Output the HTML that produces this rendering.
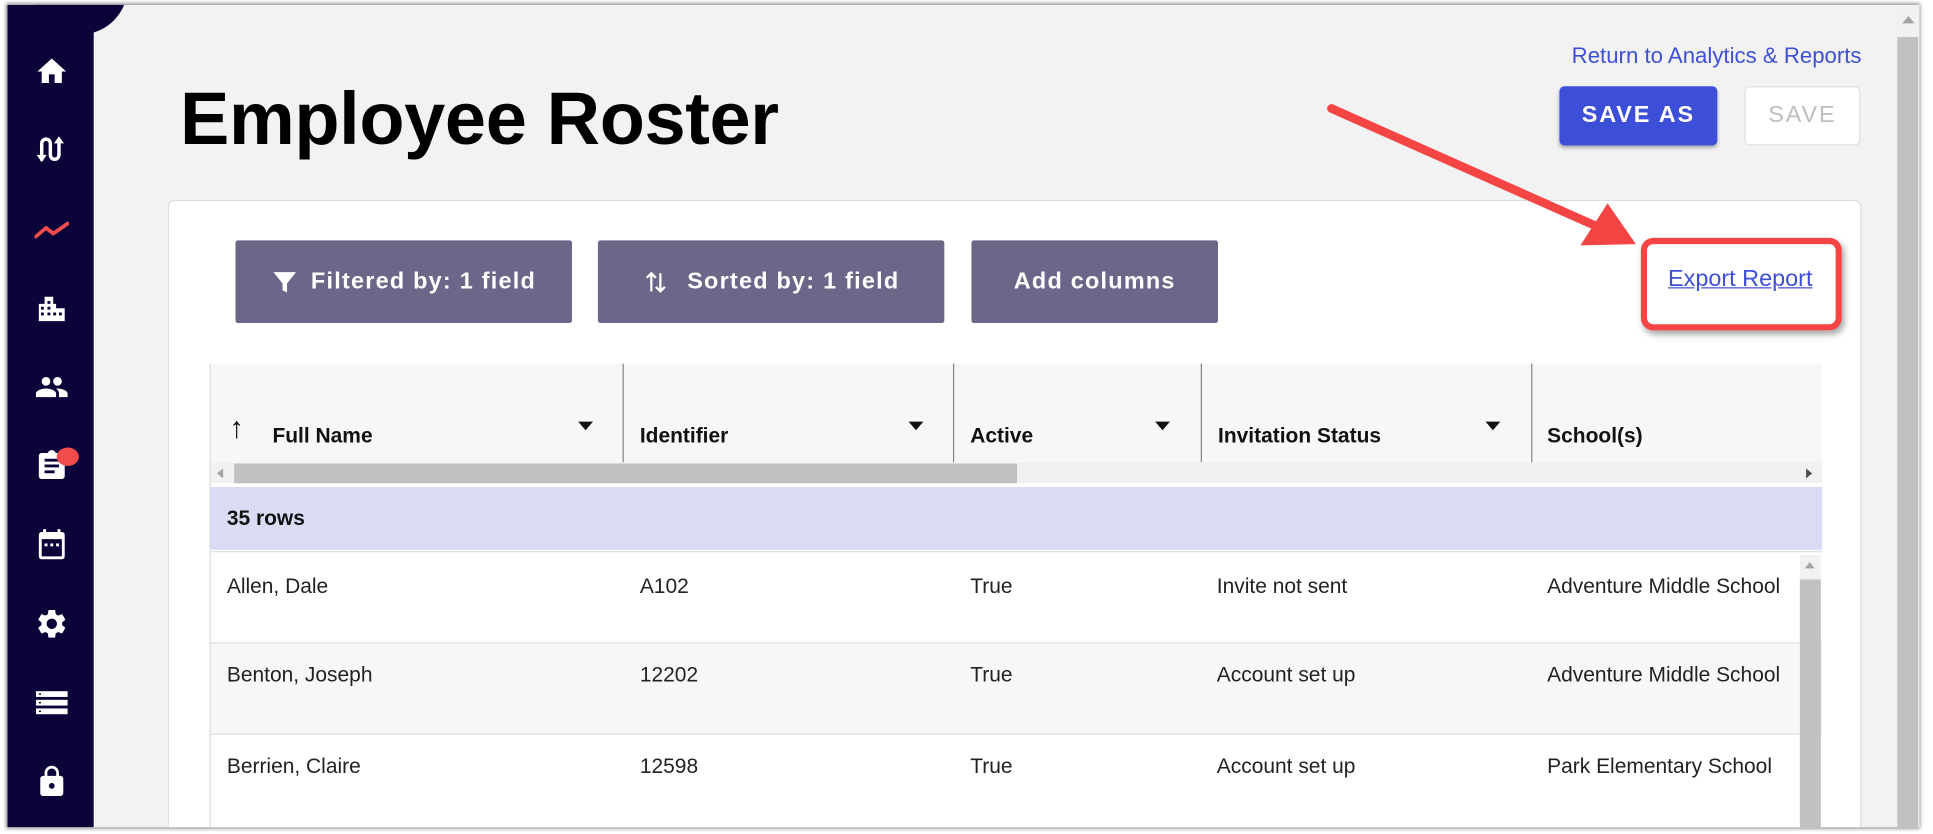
<!DOCTYPE html>
<html><head><meta charset="utf-8"><style>
*{margin:0;padding:0;box-sizing:border-box}
html,body{width:1933px;height:834px;overflow:hidden;background:#fff;font-family:"Liberation Sans",Arial,sans-serif}
#w{position:absolute;left:0;top:0;width:1568px;height:676px;transform:scale(1.2328);transform-origin:0 0;overflow:hidden}
.a{position:absolute}
.frame{left:6px;top:4px;width:1551px;height:667px;background:#f2f2f2;box-shadow:0 0 3px 1px #888;overflow:hidden}
.side{left:0;top:0;width:70px;height:100%;background:#0a0438}
.ic{position:absolute;left:22px;width:28px;height:28px}
.btn{position:absolute;top:191px;height:67px;background:#6b6788;color:#fff;font-weight:bold;font-size:19px;letter-spacing:1px;display:flex;align-items:center;justify-content:center;border-radius:2px}
.hd{position:absolute;top:340px;font-weight:bold;font-size:17px;color:#111}
.tri{position:absolute;top:338px;width:0;height:0;border-left:6px solid transparent;border-right:6px solid transparent;border-top:7px solid #111}
.vl{position:absolute;top:291px;width:1px;height:80px;background:#888}
.cell{position:absolute;font-size:17px;color:#222}
</style></head><body><div id="w">
<div class="a frame">
 <div class="a side">
  <svg class="ic" style="top:40px" viewBox="0 0 24 24"><path fill="#fff" d="M10 20v-6h4v6h5v-8h3L12 3 2 12h3v8z"/></svg>
  <svg class="ic" style="top:103px" viewBox="0 0 24 24"><path fill="none" stroke="#fff" stroke-width="2.4" d="M5 20V8a3 3 0 016 0v8a3 3 0 006 0V5"/><path fill="#fff" d="M1.5 16l3.5 5 3.5-5zM13.5 8l3.5-5 3.5 5z"/></svg>
  <svg class="ic" style="top:168px" viewBox="0 0 24 24"><polyline points="1,17 8,11 13,15 23,8" fill="none" stroke="#f24b4b" stroke-width="2.6" stroke-linecap="round" stroke-linejoin="round"/></svg>
  <svg class="ic" style="top:232px" viewBox="0 0 24 24"><path fill="#fff" d="M3 21V9h4V4h6v5h2v3h6v9z"/><g fill="#0a0438"><rect x="4.5" y="11" width="2" height="2"/><rect x="4.5" y="15" width="2" height="2"/><rect x="9" y="7" width="2" height="2"/><rect x="9" y="11" width="2" height="2"/><rect x="9" y="15" width="2" height="2"/><rect x="13" y="15" width="2" height="2"/><rect x="17" y="15" width="2" height="2"/></g></svg>
  <svg class="ic" style="top:296px" viewBox="0 0 24 24"><path fill="#fff" d="M16 11c1.66 0 2.99-1.34 2.99-3S17.66 5 16 5c-1.66 0-3 1.34-3 3s1.34 3 3 3zm-8 0c1.66 0 2.99-1.34 2.99-3S9.66 5 8 5C6.34 5 5 6.34 5 8s1.34 3 3 3zm0 2c-2.33 0-7 1.17-7 3.5V19h14v-2.5c0-2.33-4.67-3.5-7-3.5zm8 0c-.29 0-.62.02-.97.05 1.16.84 1.970 1.970 1.97 3.45V19h6v-2.5c0-2.33-4.67-3.5-7-3.5z"/></svg>
  <svg class="ic" style="top:360px" viewBox="0 0 24 24"><path fill="#fff" d="M19 3h-4.18C14.4 1.84 13.3 1 12 1c-1.3 0-2.4.84-2.82 2H5c-1.1 0-2 .9-2 2v14c0 1.1.9 2 2 2h14c1.1 0 2-.9 2-2V5c0-1.1-.9-2-2-2zm-5 14H7v-2h7v2zm3-4H7v-2h10v2zm0-4H7V7h10v2z"/></svg>
  <div class="a" style="left:40px;top:359px;width:18px;height:15px;border-radius:50%;background:#f24b4b"></div>
  <svg class="ic" style="top:424px" viewBox="0 0 24 24"><path fill="#fff" d="M19 3h-1V1h-2v2H8V1H6v2H5a2 2 0 00-2 2v15a2 2 0 002 2h14a2 2 0 002-2V5a2 2 0 00-2-2zm0 17H5V8h14z"/><rect fill="#fff" x="7" y="11" width="2" height="2"/><rect fill="#fff" x="11" y="11" width="2" height="2"/><rect fill="#fff" x="15" y="11" width="2" height="2"/></svg>
  <svg class="ic" style="top:488px" viewBox="0 0 24 24"><path fill="#fff" d="M19.14 12.94c.04-.3.06-.61.06-.94 0-.32-.02-.64-.07-.94l2.03-1.58a.49.49 0 00.12-.61l-1.92-3.32a.488.488 0 00-.59-.22l-2.39.96c-.5-.38-1.030-.7-1.62-.94l-.36-2.54a.484.484 0 00-.48-.41h-3.840c-.24 0-.43.17-.47.41l-.36 2.54c-.59.24-1.13.57-1.62.94l-2.39-.96c-.22-.08-.47 0-.59.22L2.740 8.87c-.12.21-.08.47.12.61l2.03 1.58c-.05.3-.09.63-.09.94s.02.64.07.94l-2.03 1.58a.49.49 0 00-.12.61l1.92 3.32c.12.22.37.29.59.22l2.39-.96c.5.38 1.03.7 1.62.94l.36 2.54c.05.24.24.41.48.41h3.84c.24 0 .44-.17.47-.41l.36-2.54c.59-.24 1.13-.56 1.62-.94l2.39.96c.22.08.47 0 .59-.22l1.92-3.32c.12-.22.07-.47-.12-.61l-2.01-1.58zM12 15.6c-1.98 0-3.6-1.62-3.6-3.6s1.62-3.6 3.6-3.6 3.6 1.62 3.6 3.6-1.62 3.6-3.6 3.6z"/></svg>
  <svg class="ic" style="top:552px" viewBox="0 0 24 24"><g fill="#fff"><rect x="1" y="4" width="22" height="4"/><rect x="1" y="10" width="22" height="4"/><rect x="1" y="16" width="22" height="4"/></g><g fill="#0a0438"><rect x="3" y="5.5" width="1.5" height="1"/><rect x="3" y="11.5" width="1.5" height="1"/><rect x="3" y="17.5" width="1.5" height="1"/></g></svg>
  <svg class="ic" style="top:616px" viewBox="0 0 24 24"><path fill="#fff" d="M18 8h-1V6c0-2.76-2.24-5-5-5S7 3.24 7 6v2H6c-1.1 0-2 .9-2 2v10c0 1.1.9 2 2 2h12c1.1 0 2-.9 2-2V10c0-1.1-.9-2-2-2zm-6 9c-1.1 0-2-.9-2-2s.9-2 2-2 2 .9 2 2-.9 2-2 2zm3.1-9H8.9V6c0-1.71 1.39-3.1 3.1-3.1 1.71 0 3.1 1.39 3.1 3.1v2z"/></svg>
 </div>
 <div class="a" style="left:20px;top:-56px;width:78px;height:80px;border-radius:50%;background:#0a0438"></div>

 <div class="a" style="left:140px;top:58px;font-size:60px;font-weight:bold;color:#000;letter-spacing:-0.3px">Employee Roster</div>
 <div class="a" style="right:47px;top:31px;font-size:18px;color:#3f4fd6">Return to Analytics &amp; Reports</div>
 <div class="a" style="left:1259px;top:66px;width:128px;height:48px;background:#3d4ed8;border-radius:4px;color:#fff;font-weight:bold;font-size:19px;letter-spacing:1.5px;display:flex;align-items:center;justify-content:center;box-shadow:0 2px 3px rgba(0,0,0,.3)">SAVE AS</div>
 <div class="a" style="left:1409px;top:66px;width:94px;height:48px;background:#fff;border:1px solid #e0e0e0;border-radius:4px;color:#bdbdbd;font-size:19px;letter-spacing:1.5px;display:flex;align-items:center;justify-content:center">SAVE</div>

 <div class="a" style="left:130px;top:158px;width:1374px;height:509px;background:#fff;border:1px solid #ddd;border-bottom:none;border-radius:6px 6px 0 0"></div>
 <div class="btn" style="left:185px;width:273px"><svg width="22" height="24" viewBox="0 0 24 24" style="margin-right:10px"><path fill="#fff" d="M2 3h20l-8 10v8l-4-2v-6z"/></svg>Filtered by: 1 field</div>
 <div class="btn" style="left:479px;width:281px"><svg width="22" height="24" viewBox="0 0 24 24" style="margin-right:14px"><path fill="none" stroke="#fff" stroke-width="2" d="M8 20V4M4 8l4-4 4 4M16 4v16M12 16l4 4 4-4"/></svg>Sorted by: 1 field</div>
 <div class="btn" style="left:782px;width:200px">Add columns</div>

 <div class="a" style="left:1347px;top:212px;font-size:19px;color:#3f4fd6;text-decoration:underline">Export Report</div>
 <div class="a" style="left:1325px;top:189px;width:163px;height:75px;border:5px solid #f44444;border-radius:10px;box-shadow:2px 3px 5px rgba(0,0,0,.35)"></div>
 <svg class="a" style="left:0;top:0" width="1551" height="667"><line x1="1074" y1="84" x2="1290" y2="180" stroke="#f44444" stroke-width="7" stroke-linecap="round"/><polygon points="1321,194 1276,195 1298,161" fill="#f44444"/></svg>

 <div class="a" style="left:164px;top:291px;width:1308px;height:80px;background:#f7f7f7"></div>
 <div class="vl" style="left:499px"></div><div class="vl" style="left:767px"></div><div class="vl" style="left:968px"></div><div class="vl" style="left:1236px"></div>
 <div class="a" style="left:180px;top:330px;font-size:24px;color:#111">↑</div>
 <div class="hd" style="left:215px">Full Name</div><div class="tri" style="left:463px"></div>
 <div class="hd" style="left:513px">Identifier</div><div class="tri" style="left:731px"></div>
 <div class="hd" style="left:781px">Active</div><div class="tri" style="left:931px"></div>
 <div class="hd" style="left:982px">Invitation Status</div><div class="tri" style="left:1199px"></div>
 <div class="hd" style="left:1249px">School(s)</div>
 <div class="a" style="left:164px;top:371px;width:1308px;height:17px;background:#f1f1f1"></div>
 <div class="a" style="left:184px;top:372px;width:635px;height:16px;background:#c1c1c1"></div>
 <div class="a" style="left:170px;top:376px;border-top:4px solid transparent;border-bottom:4px solid transparent;border-right:5px solid #a3a3a3"></div>
 <div class="a" style="left:1459px;top:376px;border-top:4px solid transparent;border-bottom:4px solid transparent;border-left:5px solid #505050"></div>

 <div class="a" style="left:164px;top:391px;width:1308px;height:51px;background:#dadcf5"></div>
 <div class="a" style="left:178px;top:407px;font-weight:bold;font-size:17px;color:#111">35 rows</div>
 <div class="a" style="left:164px;top:443px;width:1308px;height:74px;background:#fff;border-top:1px solid #e0e0e0"></div>
 <div class="a" style="left:164px;top:517px;width:1308px;height:74px;background:#f7f7f7;border-top:1px solid #e0e0e0"></div>
 <div class="a" style="left:164px;top:591px;width:1308px;height:76px;background:#fff;border-top:1px solid #e0e0e0"></div>
 <div class="a" style="left:164px;top:291px;width:1px;height:376px;background:#ddd"></div>

 <div class="cell" style="left:178px;top:462px">Allen, Dale</div><div class="cell" style="left:513px;top:462px">A102</div><div class="cell" style="left:781px;top:462px">True</div><div class="cell" style="left:981px;top:462px">Invite not sent</div><div class="cell" style="left:1249px;top:462px;width:201px;overflow:hidden;white-space:nowrap">Adventure Middle School</div>
 <div class="cell" style="left:178px;top:534px">Benton, Joseph</div><div class="cell" style="left:513px;top:534px">12202</div><div class="cell" style="left:781px;top:534px">True</div><div class="cell" style="left:981px;top:534px">Account set up</div><div class="cell" style="left:1249px;top:534px;width:201px;overflow:hidden;white-space:nowrap">Adventure Middle School</div>
 <div class="cell" style="left:178px;top:608px">Berrien, Claire</div><div class="cell" style="left:513px;top:608px">12598</div><div class="cell" style="left:781px;top:608px">True</div><div class="cell" style="left:981px;top:608px">Account set up</div><div class="cell" style="left:1249px;top:608px;white-space:nowrap">Park Elementary School</div>

 <div class="a" style="left:1454px;top:446px;width:17px;height:221px;background:#f1f1f1"></div>
 <div class="a" style="left:1454px;top:466px;width:17px;height:201px;background:#c1c1c1"></div>
 <div class="a" style="left:1458px;top:452px;border-left:4px solid transparent;border-right:4px solid transparent;border-bottom:5px solid #a3a3a3"></div>

 <div class="a" style="left:1532px;top:0;width:19px;height:667px;background:#f1f1f1"></div>
 <div class="a" style="left:1533px;top:26px;width:17px;height:641px;background:#c1c1c1"></div>
 <div class="a" style="left:1537px;top:9px;border-left:5px solid transparent;border-right:5px solid transparent;border-bottom:6px solid #a3a3a3"></div>
</div>
</div></body></html>
